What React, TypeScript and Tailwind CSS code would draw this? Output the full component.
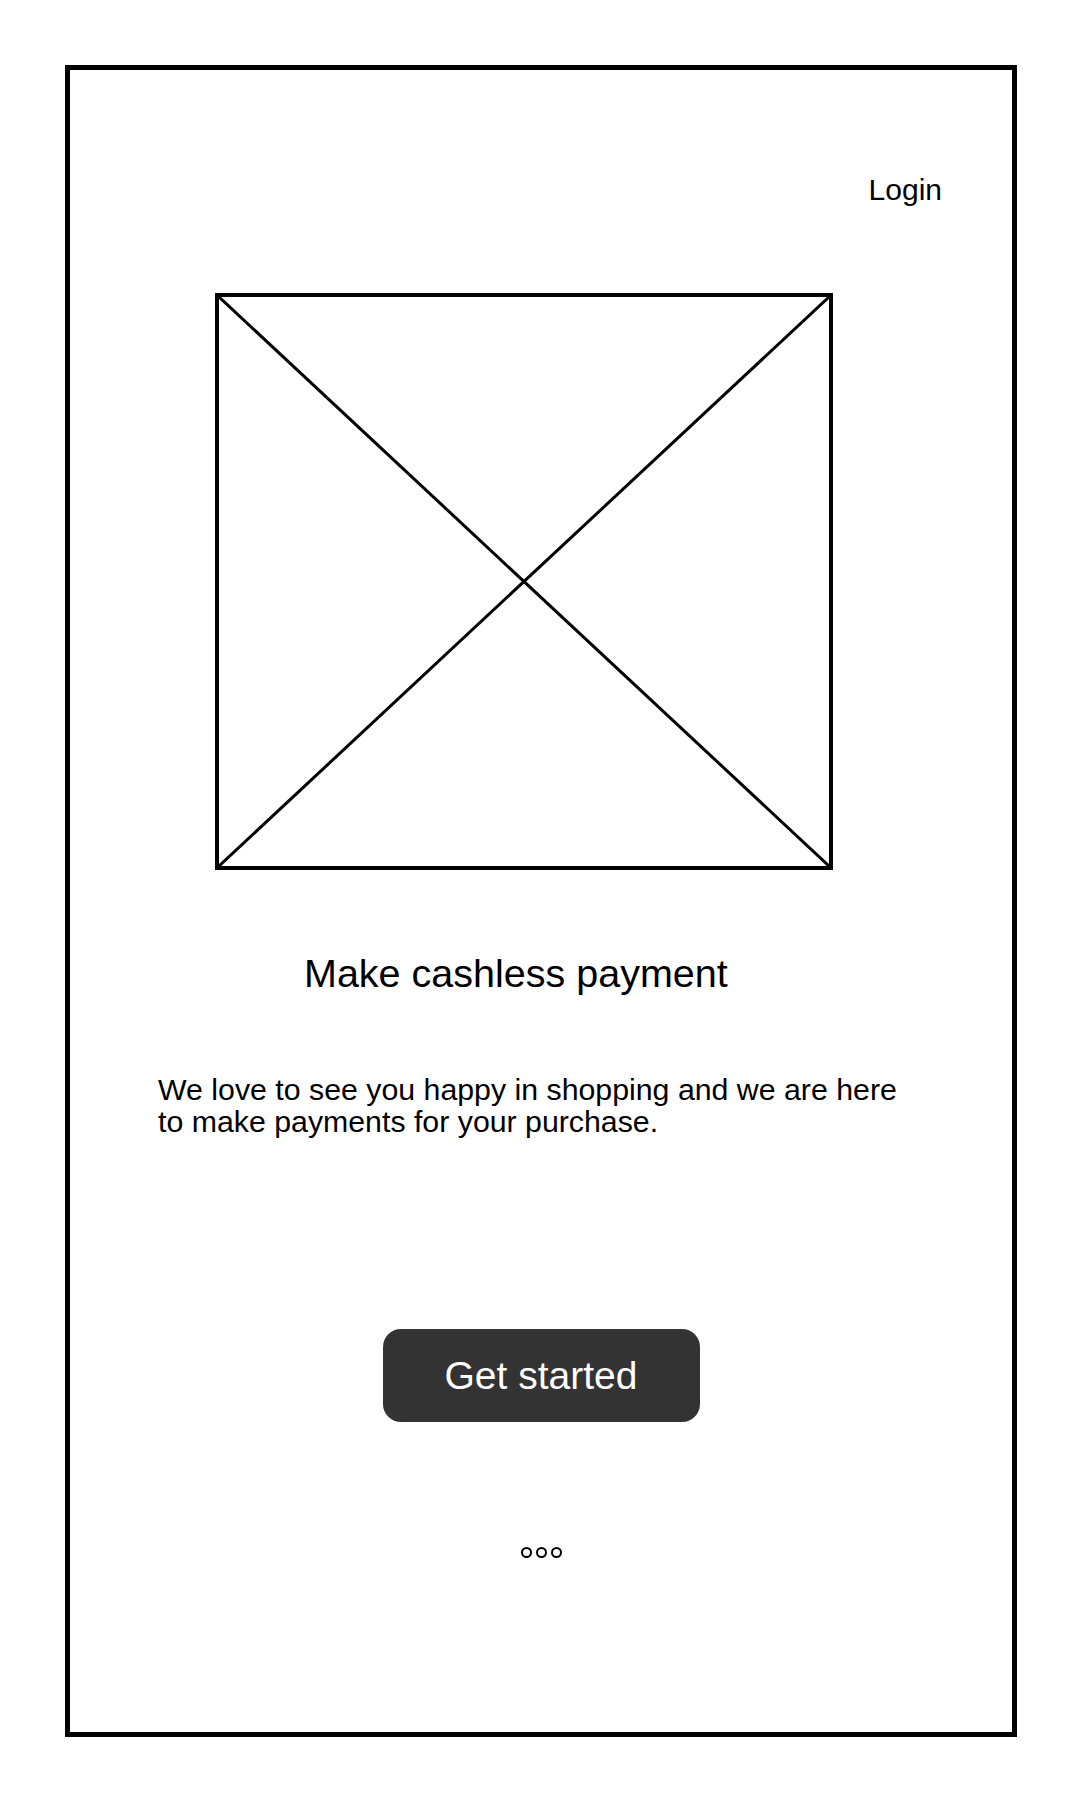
export default function App() {
  return (
    <div className="min-h-[1800px] w-[1080px] bg-white pt-[65px] pl-[65px] font-['Liberation_Sans',Arial,sans-serif] text-black">
      <div className="w-[952px] h-[1672px] border-[5px] border-black">
        {/* top bar */}
        <div className="mt-[102px] flex justify-end pr-[70px]">
          <button className="text-[30px] leading-[36px] text-black">Login</button>
        </div>

        {/* image placeholder */}
        <div className="mt-[85px] ml-[145px] w-[618px] h-[577px] border-4 border-black">
          <svg className="block w-full h-full" viewBox="0 0 100 100" preserveAspectRatio="none">
            <line x1="0" y1="0" x2="100" y2="100" stroke="black" strokeWidth="3" vectorEffect="non-scaling-stroke" />
            <line x1="100" y1="0" x2="0" y2="100" stroke="black" strokeWidth="3" vectorEffect="non-scaling-stroke" />
          </svg>
        </div>

        <h1 className="mt-[81px] ml-[234px] text-[39.5px] leading-[44px] font-normal">Make cashless payment</h1>

        <p className="mt-[79px] ml-[88px] text-[30.3px] leading-[32px]">
          We love to see you happy in shopping and we are here
          <br />
          to make payments for your purchase.
        </p>

        <div className="mt-[191px] flex justify-center">
          <button className="w-[317px] h-[93px] rounded-[18px] bg-[#333333] text-white text-[39px] leading-none">
            Get started
          </button>
        </div>

        {/* pager dots */}
        <div className="mt-[125px] flex justify-center gap-[4px]">
          <span className="w-[11px] h-[11px] rounded-full border-[2.5px] border-black" />
          <span className="w-[11px] h-[11px] rounded-full border-[2.5px] border-black" />
          <span className="w-[11px] h-[11px] rounded-full border-[2.5px] border-black" />
        </div>
      </div>
    </div>
  );
}
